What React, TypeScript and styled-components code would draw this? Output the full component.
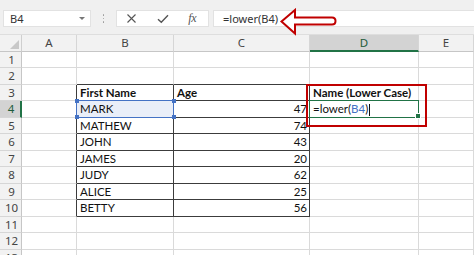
import React from "react";
import styled, { createGlobalStyle, css } from "styled-components";

const GlobalStyle = createGlobalStyle`
  html, body { margin: 0; padding: 0; background: #ffffff; overflow: hidden; }
  body { font-family: "Lato", "Liberation Sans", sans-serif; }
  * { box-sizing: border-box; }
`;

const GREEN = "#217346";
const BLUE = "#4472c4";
const RED = "#c00000";
const GRID = "#dadada";
const DARK = "#3c3c3c";

const Page = styled.div`
  width: 474px;
  height: 255px;
  overflow: hidden;
  background: #fff;
`;

const Toolbar = styled.div`
  position: relative;
  height: 35px;
  background: #f0f0f0;
  border-bottom: 1px solid #dedede;
  display: flex;
  align-items: flex-start;
  padding: 10px 0 0 3px;
`;

const NameBox = styled.div`
  width: 88px;
  height: 17px;
  background: #fff;
  border: 1px solid #e2e2e2;
  display: flex;
  align-items: center;
  justify-content: space-between;
  padding: 0 5px 0 6px;
  font-family: "Noto Sans", "Open Sans", sans-serif;
  font-size: 11px;
  color: #333;
`;

const Caret = styled.span`
  width: 0;
  height: 0;
  border-left: 3px solid transparent;
  border-right: 3px solid transparent;
  border-top: 3px solid #777;
`;

const Dots = styled.div`
  width: 25px;
  height: 17px;
  display: flex;
  flex-direction: column;
  align-items: center;
  justify-content: center;
  gap: 2px;
  & > span {
    width: 1.5px;
    height: 1.5px;
    border-radius: 50%;
    background: #9a9a9a;
  }
`;

const FxBox = styled.div`
  width: 93px;
  height: 17px;
  background: #fff;
  border: 1px solid #e2e2e2;
  display: flex;
  align-items: center;
  justify-content: space-between;
  padding: 0 12px 0 9px;
  color: #555;
`;

const FxText = styled.span`
  font-family: "Liberation Serif", "DejaVu Serif", serif;
  font-style: italic;
  font-size: 12px;
  color: #555;
  letter-spacing: -0.5px;
`;

const FormulaInput = styled.div`
  flex: 1;
  height: 17px;
  margin-left: 4px;
  background: #fff;
  border: 1px solid #e2e2e2;
  border-right: none;
  display: flex;
  align-items: center;
  padding-left: 9px;
  font-family: "Noto Sans", "Open Sans", sans-serif;
  font-size: 11px;
  color: #333;
`;

const Arrow = styled.svg`
  position: absolute;
  left: 279px;
  top: 8px;
`;

const Sheet = styled.div`
  display: grid;
  grid-template-columns: 22px 55px 97px 136px 109px 1fr;
  grid-template-rows: 16.5px;
  grid-auto-rows: 16.5px;
`;

const headerText = css`
  font-family: "Noto Sans", "Open Sans", sans-serif;
  font-size: 11.5px;
  color: #444;
`;

const Corner = styled.div`
  position: relative;
  background: #f2f2f2;
  border-right: 1px solid #cfcfcf;
  border-bottom: 1px solid #c6c6c6;
  &::after {
    content: "";
    position: absolute;
    right: 2px;
    bottom: 2px;
    width: 0;
    height: 0;
    border-left: 9px solid transparent;
    border-bottom: 9px solid #c8c8c8;
  }
`;

const ColHeader = styled.div<{ $active?: boolean }>`
  ${headerText};
  display: flex;
  align-items: center;
  justify-content: center;
  background: ${(p) => (p.$active ? "#d3d3d3" : "#f2f2f2")};
  color: ${(p) => (p.$active ? "#1e5c3a" : "#444")};
  border-right: 1px solid #d6d6d6;
  border-bottom: ${(p) => (p.$active ? `2px solid ${GREEN}` : "1px solid #c6c6c6")};
`;

const RowHeader = styled.div<{ $active?: boolean }>`
  ${headerText};
  display: flex;
  align-items: center;
  justify-content: center;
  padding-left: 2px;
  background: ${(p) => (p.$active ? "#d3d3d3" : "#f2f2f2")};
  color: ${(p) => (p.$active ? "#1e5c3a" : "#444")};
  border-bottom: 1px solid #d6d6d6;
  border-right: ${(p) => (p.$active ? `2px solid ${GREEN}` : "1px solid #c6c6c6")};
`;

const Cell = styled.div<{
  $dr?: boolean;
  $db?: boolean;
  $bold?: boolean;
  $right?: boolean;
}>`
  position: relative;
  display: flex;
  align-items: center;
  justify-content: ${(p) => (p.$right ? "flex-end" : "flex-start")};
  padding: 0 2px 0 3px;
  font-family: "Lato", "Liberation Sans", sans-serif;
  font-size: 11.5px;
  font-weight: ${(p) => (p.$bold ? 700 : 400)};
  color: #111;
  white-space: nowrap;
  border-right: 1px solid ${(p) => (p.$dr ? DARK : GRID)};
  border-bottom: 1px solid ${(p) => (p.$db ? DARK : GRID)};
`;

const CellText = styled.span`
  position: relative;
  z-index: 2;
`;

const RefBox = styled.div`
  position: absolute;
  left: -1px;
  top: -1px;
  right: -1px;
  bottom: -1px;
  background: #e9eef8;
  border: 1px solid ${BLUE};
  z-index: 1;
`;

const Handle = styled.span<{ $x: "l" | "r"; $y: "t" | "b" }>`
  position: absolute;
  width: 4px;
  height: 4px;
  background: ${BLUE};
  ${(p) => (p.$x === "l" ? "left: -2.5px;" : "right: -2.5px;")}
  ${(p) => (p.$y === "t" ? "top: -2.5px;" : "bottom: -2.5px;")}
`;

const EditBox = styled.div`
  position: absolute;
  left: -1px;
  top: -1px;
  right: -1px;
  bottom: -1px;
  border: 1.5px solid ${GREEN};
  z-index: 1;
  &::after {
    content: "";
    position: absolute;
    right: -2.5px;
    bottom: -2.5px;
    width: 4px;
    height: 4px;
    background: ${GREEN};
    border: 1px solid #fff;
  }
`;

const RefText = styled.span`
  color: ${BLUE};
`;

const Cursor = styled.span`
  display: inline-block;
  width: 1px;
  height: 12px;
  background: #111;
  margin-left: 1px;
  vertical-align: middle;
`;

const RedFrame = styled.div`
  position: absolute;
  left: -4px;
  top: -1px;
  width: 121px;
  height: 43px;
  border: 2px solid ${RED};
  z-index: 5;
  pointer-events: none;
`;

type Row = {
  n: number;
  b?: string;
  c?: string;
};

const rows: Row[] = [
  { n: 1 },
  { n: 2 },
  { n: 3, b: "First Name", c: "Age" },
  { n: 4, b: "MARK", c: "47" },
  { n: 5, b: "MATHEW", c: "74" },
  { n: 6, b: "JOHN", c: "43" },
  { n: 7, b: "JAMES", c: "20" },
  { n: 8, b: "JUDY", c: "62" },
  { n: 9, b: "ALICE", c: "25" },
  { n: 10, b: "BETTY", c: "56" },
  { n: 11 },
  { n: 12 },
  { n: 13 },
];

const XIcon = () => (
  <svg width="11" height="11" viewBox="0 0 11 11">
    <path d="M1.5 1.5 L9.5 9.5 M9.5 1.5 L1.5 9.5" stroke="#555" strokeWidth="1.1" fill="none" />
  </svg>
);

const CheckIcon = () => (
  <svg width="12" height="10" viewBox="0 0 12 10">
    <path d="M1 5.2 L4.3 8.3 L11 1.3" stroke="#555" strokeWidth="1.4" fill="none" />
  </svg>
);

export default function App() {
  return (
    <Page>
      <GlobalStyle />
      <Toolbar>
        <NameBox>
          <span>B4</span>
          <Caret />
        </NameBox>
        <Dots>
          <span />
          <span />
          <span />
        </Dots>
        <FxBox>
          <XIcon />
          <CheckIcon />
          <FxText>fx</FxText>
        </FxBox>
        <FormulaInput>=lower(B4)</FormulaInput>
        <Arrow width="60" height="28" viewBox="0 0 60 28">
          <path
            d="M2.5 13.5 L16 2 L16 9.5 L53 9.5 Q56.5 9.5 56.5 13 Q56.5 16.5 53 16.5 L16 16.5 L16 25.5 Z"
            fill="#ffffff"
            stroke={RED}
            strokeWidth="2"
            strokeLinejoin="miter"
          />
        </Arrow>
      </Toolbar>
      <Sheet>
        <Corner />
        {["A", "B", "C", "D", "E"].map((l) => (
          <ColHeader key={l} $active={l === "D"}>
            {l}
          </ColHeader>
        ))}
        {rows.map((r) => {
          const inTable = r.n >= 3 && r.n <= 10;
          const aboveTable = r.n === 2;
          const header = r.n === 3;
          return (
            <React.Fragment key={r.n}>
              <RowHeader $active={r.n === 4}>{r.n}</RowHeader>
              <Cell $dr={inTable} />
              <Cell $dr={inTable} $db={inTable || aboveTable} $bold={header}>
                {r.n === 4 && (
                  <RefBox>
                    <Handle $x="l" $y="t" />
                    <Handle $x="r" $y="t" />
                    <Handle $x="l" $y="b" />
                    <Handle $x="r" $y="b" />
                  </RefBox>
                )}
                {r.b && <CellText>{r.b}</CellText>}
              </Cell>
              <Cell
                $dr={inTable}
                $db={inTable || aboveTable}
                $bold={header}
                $right={!header}
              >
                {r.c && <CellText>{r.c}</CellText>}
              </Cell>
              <Cell $bold={header}>
                {r.n === 3 && (
                  <>
                    <CellText>Name (Lower Case)</CellText>
                    <RedFrame />
                  </>
                )}
                {r.n === 4 && (
                  <>
                    <EditBox />
                    <CellText>
                      =lower(<RefText>B4</RefText>)
                      <Cursor />
                    </CellText>
                  </>
                )}
              </Cell>
              <Cell />
            </React.Fragment>
          );
        })}
      </Sheet>
    </Page>
  );
}
